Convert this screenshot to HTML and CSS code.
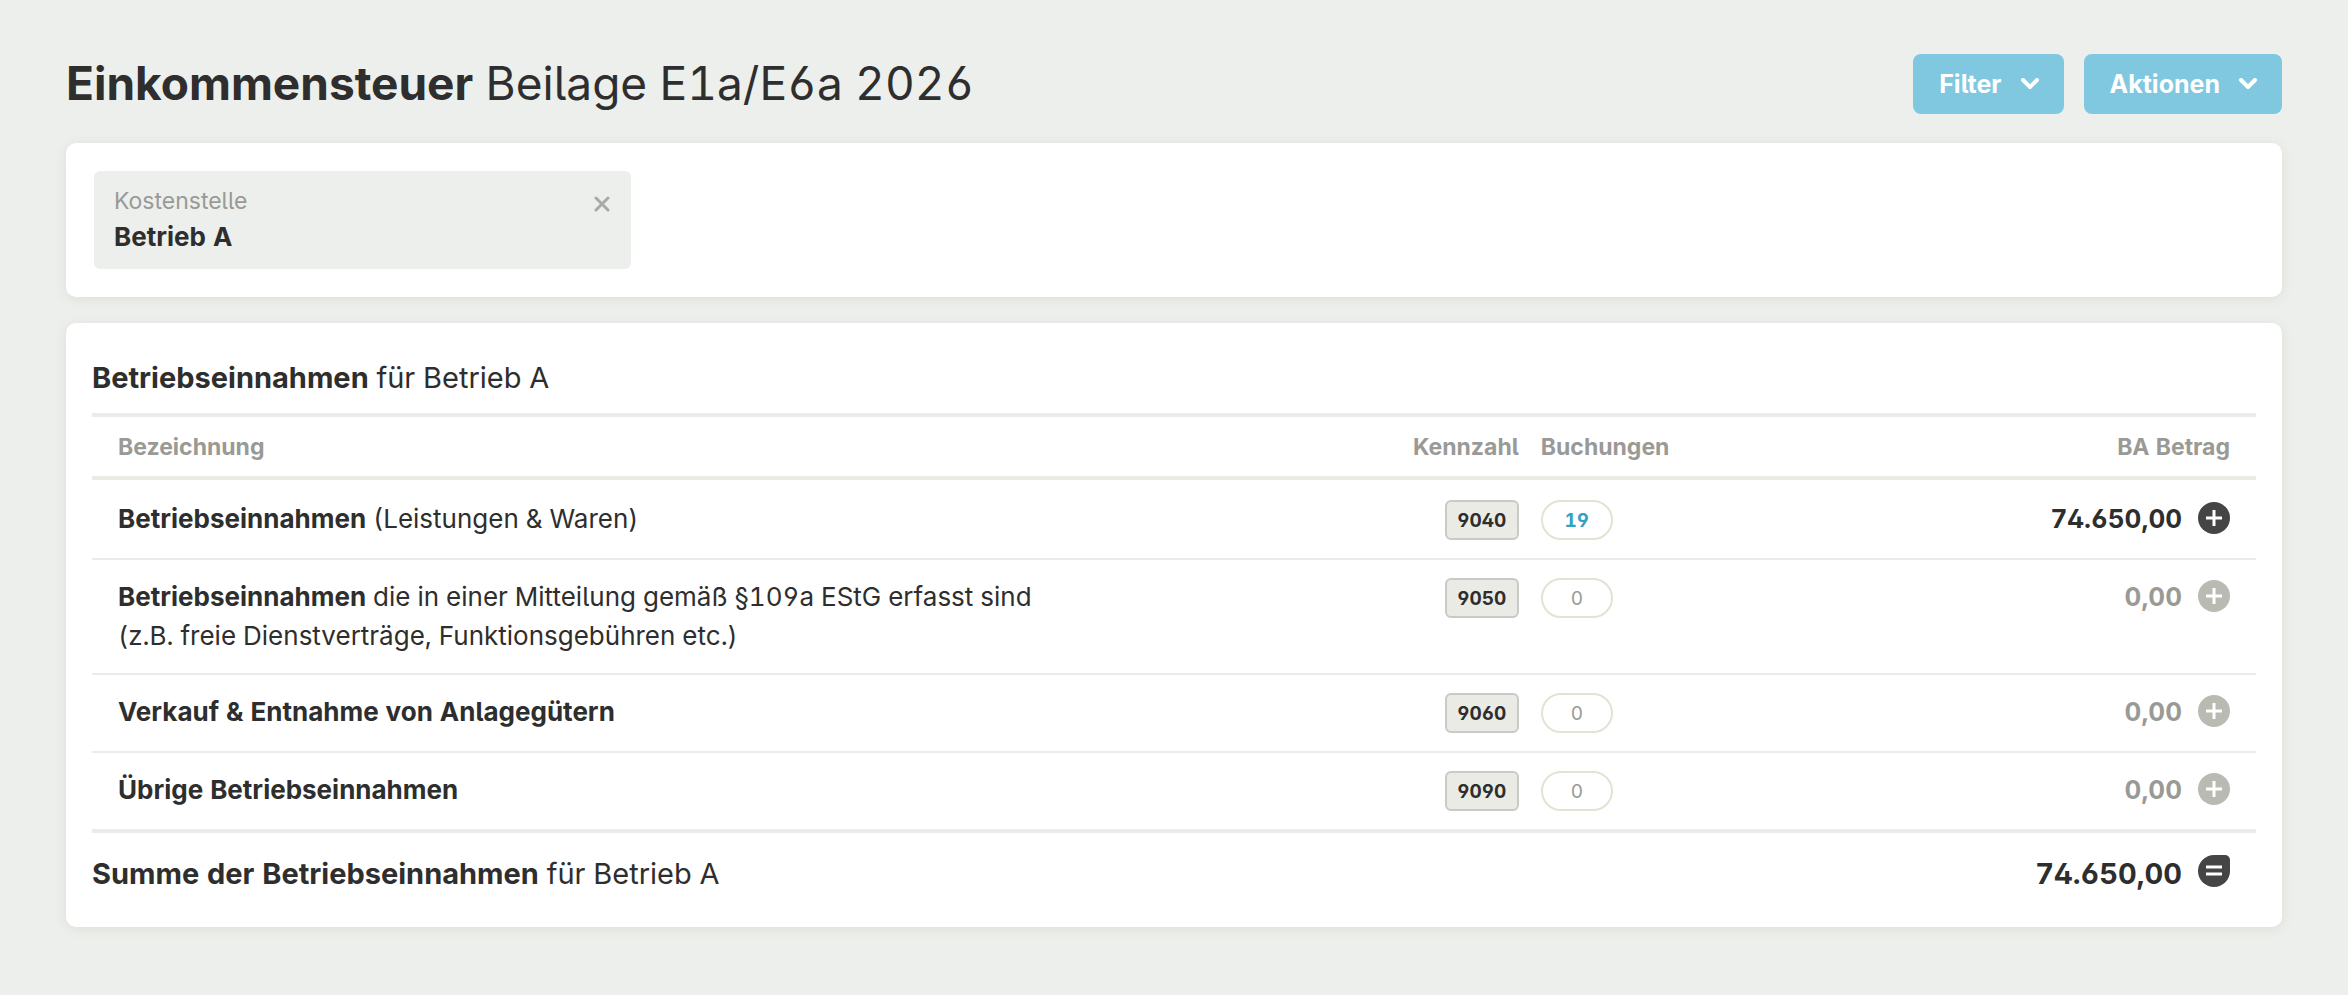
FILE: index.html
```
<!DOCTYPE html>
<html lang="de">

<head>
    <meta charset="UTF-8">
    <meta name="viewport" content="width=device-width, initial-scale=1.0">
    <title>Einkommensteuer Beilage E1a/E6a 2026</title>
    <link rel="stylesheet" href="styles.css">
</head>

<body>
    <header class="page-head">
        <h1><b>Einkommensteuer</b> Beilage E1a/E6a 2026</h1>
        <div class="actions">
            <button type="button" class="btn">Filter
                <svg class="chevron" viewBox="0 0 18 12"><path d="M2 2l7 7 7-7"/></svg>
            </button>
            <button type="button" class="btn">Aktionen
                <svg class="chevron" viewBox="0 0 18 12"><path d="M2 2l7 7 7-7"/></svg>
            </button>
        </div>
    </header>

    <section class="card filters">
        <div class="chip">
            <div>
                <div class="chip-label">Kostenstelle</div>
                <div class="chip-value">Betrieb A</div>
            </div>
            <button type="button" class="chip-close" aria-label="Entfernen">
                <svg viewBox="0 0 16 16"><path d="M2 2l12 12M14 2L2 14"/></svg>
            </button>
        </div>
    </section>

    <section class="card report">
        <h2><b>Betriebseinnahmen</b> für Betrieb A</h2>
        <table>
            <colgroup>
                <col class="col-name">
                <col class="col-code">
                <col class="col-count">
                <col>
            </colgroup>
            <thead>
                <tr>
                    <th class="name">Bezeichnung</th>
                    <th class="code">Kennzahl</th>
                    <th class="count">Buchungen</th>
                    <th class="amount">BA Betrag</th>
                </tr>
            </thead>
            <tbody>
                <tr>
                    <td class="name"><b>Betriebseinnahmen</b> (Leistungen &amp; Waren)</td>
                    <td class="code"><span class="badge">9040</span></td>
                    <td class="count"><a href="#" class="pill active">19</a></td>
                    <td class="amount">
                        <div class="sum">74.650,00
                            <svg class="icon" viewBox="0 0 32 32"><circle cx="16" cy="16" r="16"/><path d="M16 8v16M8 16h16"/></svg>
                        </div>
                    </td>
                </tr>
                <tr>
                    <td class="name"><b>Betriebseinnahmen</b> die in einer Mitteilung gemäß §109a EStG erfasst sind<br>(z.B. freie Dienstverträge, Funktionsgebühren etc.)</td>
                    <td class="code"><span class="badge">9050</span></td>
                    <td class="count"><span class="pill">0</span></td>
                    <td class="amount">
                        <div class="sum empty">0,00
                            <svg class="icon" viewBox="0 0 32 32"><circle cx="16" cy="16" r="16"/><path d="M16 8v16M8 16h16"/></svg>
                        </div>
                    </td>
                </tr>
                <tr>
                    <td class="name"><b>Verkauf &amp; Entnahme von Anlagegütern</b></td>
                    <td class="code"><span class="badge">9060</span></td>
                    <td class="count"><span class="pill">0</span></td>
                    <td class="amount">
                        <div class="sum empty">0,00
                            <svg class="icon" viewBox="0 0 32 32"><circle cx="16" cy="16" r="16"/><path d="M16 8v16M8 16h16"/></svg>
                        </div>
                    </td>
                </tr>
                <tr>
                    <td class="name"><b>Übrige Betriebseinnahmen</b></td>
                    <td class="code"><span class="badge">9090</span></td>
                    <td class="count"><span class="pill">0</span></td>
                    <td class="amount">
                        <div class="sum empty">0,00
                            <svg class="icon" viewBox="0 0 32 32"><circle cx="16" cy="16" r="16"/><path d="M16 8v16M8 16h16"/></svg>
                        </div>
                    </td>
                </tr>
            </tbody>
            <tfoot>
                <tr>
                    <td colspan="3" class="total"><b>Summe der Betriebseinnahmen</b> für Betrieb A</td>
                    <td class="amount">
                        <div class="sum">74.650,00
                            <svg class="icon" viewBox="0 0 32 32"><path class="shape" d="M16 0h11a5 5 0 0 1 5 5v11a16 16 0 1 1-16-16z"/><path d="M8 12h16M8 19h16"/></svg>
                        </div>
                    </td>
                </tr>
            </tfoot>
        </table>
    </section>
</body>

</html>
```
FILE: styles.css
```
* {
    box-sizing: border-box;
}

body {
    margin: 0;
    padding: 54px 66px;
    background-color: #edefec;
    color: #2e2e2e;
    font-family: Inter, "Liberation Sans", sans-serif;
    font-size: 26px;
    line-height: 39px;
    font-optical-sizing: none;
    font-feature-settings: "tnum", "ss01", "cv05";
}

h1,
h2 {
    margin: 0;
    font-weight: 400;
}

b {
    font-weight: 700;
}

button {
    border: 0;
    font: inherit;
    font-feature-settings: inherit;
    cursor: pointer;
}

svg {
    display: block;
    fill: none;
    stroke: currentColor;
}

.page-head {
    display: flex;
    justify-content: space-between;
    align-items: flex-start;
    margin-bottom: 29px;
}

h1 {
    font-size: 46px;
    line-height: 58px;
}

.actions {
    display: flex;
    gap: 20px;
}

.btn {
    display: flex;
    align-items: center;
    gap: 19px;
    height: 60px;
    padding: 0 25px 0 26px;
    border-radius: 8px;
    background-color: #7fc8e0;
    color: #fff;
    font-size: 25px;
    font-weight: 700;
}

.chevron {
    width: 18px;
    height: 12px;
    stroke-width: 4;
    stroke-linecap: round;
    stroke-linejoin: round;
}

.card {
    border-radius: 10px;
    background-color: #fff;
    box-shadow: 0 2px 12px rgba(90, 90, 50, .1);
}

.filters {
    display: flex;
    margin-bottom: 26px;
    padding: 28px;
}

.chip {
    display: flex;
    justify-content: space-between;
    align-items: flex-start;
    width: calc(25% - 3px);
    padding: 12px 21px 14px 20px;
    border-radius: 6px;
    background-color: #edefec;
}

.chip-label {
    color: #999a96;
    font-size: 23px;
    line-height: 36px;
}

.chip-value {
    font-weight: 700;
    line-height: 36px;
}

.chip-close {
    margin-top: 13px;
    padding: 0;
    background: none;
    color: #a9aaa6;
}

.chip-close svg {
    width: 16px;
    height: 16px;
    stroke-width: 3;
    stroke-linecap: round;
}

.report {
    padding: 34px 26px 18px;
}

h2 {
    padding-bottom: 14px;
    font-size: 29px;
    line-height: 42px;
}

table {
    width: 100%;
    table-layout: fixed;
    border-collapse: separate;
    border-spacing: 0;
}

.col-name {
    width: 56%;
}

.col-code {
    width: 226px;
}

.col-count {
    width: 200px;
}

th {
    padding: 12px 11px 10px;
    border-top: 4px solid #ebebe9;
    border-bottom: 4px solid #ebebe4;
    color: #999a96;
    font-size: 23px;
    font-weight: 700;
    line-height: 37px;
    text-align: left;
}

td {
    padding: 18px 11px;
    border-bottom: 2px solid #ebebe9;
    vertical-align: top;
}

td.name,
td.amount {
    padding-top: 17px;
}

tbody tr:first-child td {
    padding-top: 20px;
}

tbody tr:first-child .name,
tbody tr:first-child .amount {
    padding-top: 19px;
}

tbody tr:last-child td {
    border-bottom-width: 4px;
}

.name {
    padding-left: 26px;
}

.code {
    text-align: right;
}

.amount {
    padding-right: 26px;
    text-align: right;
}

.badge,
.pill {
    display: inline-block;
    height: 40px;
    border: 2px solid #c9cac7;
    font-size: 19px;
    line-height: 38px;
    text-align: center;
    vertical-align: top;
}

.badge {
    width: 74px;
    border-radius: 6px;
    background-color: #ebebe5;
    font-weight: 700;
}

.pill {
    width: 72px;
    border-color: #e3e3d3;
    border-radius: 20px;
    color: #999a96;
    text-decoration: none;
}

.pill.active {
    color: #35a0c6;
    font-weight: 700;
}

.sum {
    display: flex;
    justify-content: flex-end;
    gap: 16px;
    font-weight: 700;
}

.sum.empty {
    color: #999a96;
}

.icon {
    width: 32px;
    height: 32px;
    margin-top: 3px;
    fill: #454545;
    stroke: #fff;
    stroke-width: 3;
}

.icon circle,
.icon .shape {
    stroke: none;
}

.empty .icon {
    fill: #b9bab2;
}

tfoot td,
tfoot td.amount {
    padding: 20px 0 14px;
    border-bottom: 0;
    font-size: 29px;
    line-height: 42px;
}

tfoot td.amount {
    padding-right: 26px;
}

tfoot .icon {
    margin-top: 2px;
}
```
